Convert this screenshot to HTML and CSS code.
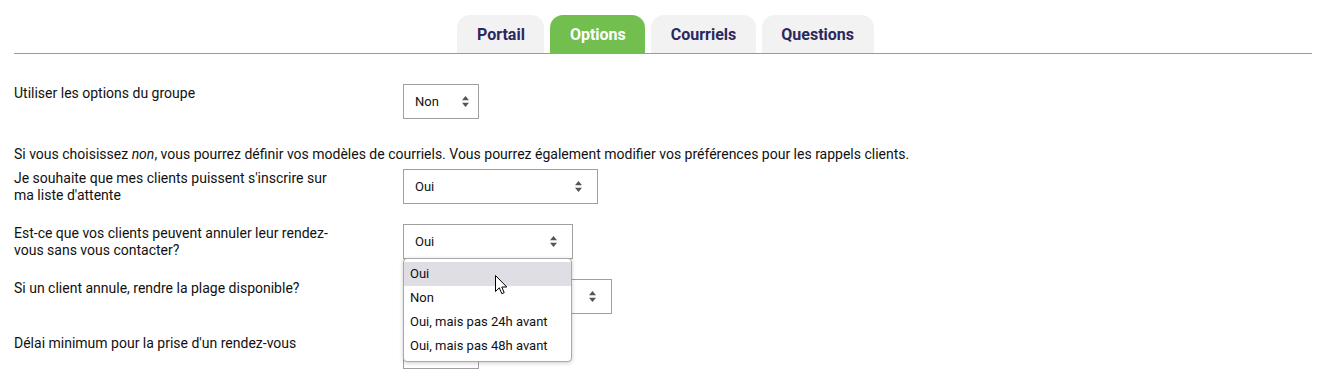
FILE: index.html
```
<!DOCTYPE html>
<html lang="fr">
<head>
    <meta charset="UTF-8">
    <meta name="viewport" content="width=device-width, initial-scale=1.0">
    <title>Options</title>
    <link rel="stylesheet" href="styles.css">
</head>
<body>
    <div class="page">
        <nav class="tabs">
            <a class="tab">Portail</a>
            <a class="tab active">Options</a>
            <a class="tab">Courriels</a>
            <a class="tab">Questions</a>
        </nav>

        <div class="settings">
            <div class="row">
                <label class="label">Utiliser les options du groupe</label>
                <div class="select w-small"><span>Non</span><svg class="arrows" width="7" height="11" viewBox="0 0 7 11"><path d="M3.5 0L7 4.2H0z M3.5 11L7 6.8H0z" fill="#555"/></svg></div>
            </div>

            <p class="note">Si vous choisissez <em>non</em>, vous pourrez définir vos modèles de courriels. Vous pourrez également modifier vos préférences pour les rappels clients.</p>

            <div class="row">
                <label class="label">Je souhaite que mes clients puissent s'inscrire sur ma liste d'attente</label>
                <div class="select w-195"><span>Oui</span><svg class="arrows" width="7" height="11" viewBox="0 0 7 11"><path d="M3.5 0L7 4.2H0z M3.5 11L7 6.8H0z" fill="#555"/></svg></div>
            </div>

            <div class="row">
                <label class="label">Est-ce que vos clients peuvent annuler leur rendez-vous sans vous contacter?</label>
                <div class="select-wrap">
                    <div class="select w-170"><span>Oui</span><svg class="arrows" width="7" height="11" viewBox="0 0 7 11"><path d="M3.5 0L7 4.2H0z M3.5 11L7 6.8H0z" fill="#555"/></svg></div>
                    <ul class="dropdown">
                        <li class="hover">Oui</li>
                        <li>Non</li>
                        <li>Oui, mais pas 24h avant</li>
                        <li>Oui, mais pas 48h avant</li>
                    </ul>
                    <svg class="cursor" width="13" height="20" viewBox="0 0 13 20"><path d="M0.5 0.5V16.5L4.3 12.8L6.8 18.7L9.2 17.7L6.8 12H11.8Z" fill="#fff" stroke="#000" stroke-width="1" stroke-linejoin="round"/></svg>
                </div>
            </div>

            <div class="row">
                <label class="label">Si un client annule, rendre la plage disponible?</label>
                <div class="select w-209"><span>Oui</span><svg class="arrows" width="7" height="11" viewBox="0 0 7 11"><path d="M3.5 0L7 4.2H0z M3.5 11L7 6.8H0z" fill="#555"/></svg></div>
            </div>

            <div class="row">
                <label class="label">Délai minimum pour la prise d'un rendez-vous</label>
                <div class="select w-small"><span>1h</span><svg class="arrows" width="7" height="11" viewBox="0 0 7 11"><path d="M3.5 0L7 4.2H0z M3.5 11L7 6.8H0z" fill="#555"/></svg></div>
            </div>
        </div>
    </div>
</body>
</html>
```

FILE: styles.css
```
body {
    margin: 0;
    font-family: Roboto, "Liberation Sans", sans-serif;
    color: #111;
    background: #fff;
    overflow: hidden;
}
.page {
    padding: 15px 14px 0;
}
.tabs {
    display: flex;
    justify-content: center;
    gap: 6px;
    border-bottom: 1px solid #9a9a9a;
    padding-left: 5px;
}
.tab {
    height: 38px;
    padding: 1px 19.5px 0;
    box-sizing: border-box;
    display: flex;
    align-items: center;
    background: #f2f2f2;
    border-radius: 13px 13px 0 0;
    font-size: 16px;
    font-weight: bold;
    color: #2b285f;
}
.tab.active {
    background: #72bf4f;
    color: #fff;
}
.settings {
    padding-top: 30px;
}
.row {
    display: flex;
    align-items: flex-start;
    margin-bottom: 20px;
}
.label {
    width: 330px;
    margin-right: 59px;
    font-size: 14px;
    line-height: 17px;
    padding-top: 1px;
}
.note {
    margin: 27px 0 6px;
    font-size: 14px;
    line-height: 17px;
}
.select {
    box-sizing: border-box;
    height: 35px;
    border: 1px solid #a0a0a0;
    display: flex;
    align-items: center;
    justify-content: space-between;
    padding: 0 15px 0 11px;
    font-size: 13px;
    background: #fff;
}
.w-small { width: 76px; padding-right: 9px; }
.w-195 { width: 195px; }
.w-170 { width: 170px; }
.w-209 { width: 209px; }
.select-wrap {
    position: relative;
}
.dropdown {
    position: absolute;
    top: 34px;
    left: 0;
    width: 169px;
    box-sizing: border-box;
    margin: 0;
    padding: 3px 0;
    list-style: none;
    background: #fff;
    border: 1px solid #a9a9a9;
    border-radius: 4px;
    box-shadow: 0 1px 4px rgba(0, 0, 0, 0.2);
    font-size: 13px;
    z-index: 10;
}
.dropdown li {
    height: 24px;
    line-height: 24px;
    padding: 0 6px;
}
.dropdown li.hover {
    background: #dfdee4;
}
.cursor {
    position: absolute;
    top: 51px;
    left: 92px;
    z-index: 11;
}
```
